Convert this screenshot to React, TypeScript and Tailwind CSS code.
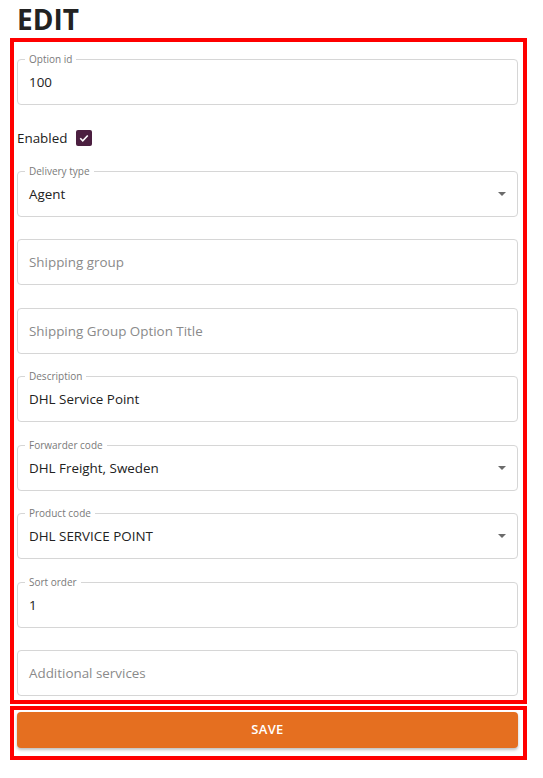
// Edit form (outlined fields + save button)
import type { ReactNode } from 'react';

type Field = {
  label: string;
  value?: string;
  select?: boolean;
  gap: string;
};

// fields after the "Enabled" row
const FIELDS: Field[] = [
  { label: 'Delivery type', value: 'Agent', select: true, gap: 'mt-0' },
  { label: 'Shipping group', gap: 'mt-[22px]' },
  { label: 'Shipping Group Option Title', gap: 'mt-[23px]' },
  { label: 'Description', value: 'DHL Service Point', gap: 'mt-[22px]' },
  { label: 'Forwarder code', value: 'DHL Freight, Sweden', select: true, gap: 'mt-[23px]' },
  { label: 'Product code', value: 'DHL SERVICE POINT', select: true, gap: 'mt-[22px]' },
  { label: 'Sort order', value: '1', gap: 'mt-[23px]' },
  { label: 'Additional services', gap: 'mt-[22px]' },
];

const Outlined = ({ label, value, select, className = '' }: Omit<Field, 'gap'> & { className?: string }) => {
  const filled = value !== undefined;
  return (
    <div className={`relative h-[46px] rounded-[4px] border border-[#d6d6d6] flex items-center pl-[11px] pr-[11px] ${className}`}>
      {filled && (
        <span className="absolute left-[7px] top-[-7px] bg-white px-[4px] text-[10px] leading-[12px] text-[#7a7a7a]">
          {label}
        </span>
      )}
      <span className={`flex-1 text-[13.4px] ${filled ? 'text-[#222]' : 'text-[#8a8a8a]'}`}>
        {filled ? value : label}
      </span>
      {select && (
        <svg width="8" height="4" viewBox="0 0 8 4" className="shrink-0">
          <path d="M0 0h8L4 4z" fill="#6b6b6b" />
        </svg>
      )}
    </div>
  );
};

const RedBox = ({ children, className = '' }: { children: ReactNode; className?: string }) => (
  <div className={`ml-[10px] mr-[16px] border-4 border-[#ff0000] pl-[3px] pr-[5px] ${className}`}>{children}</div>
);

export default function App() {
  return (
    <div className="w-[543px] h-[778px] bg-white" style={{ fontFamily: '"Open Sans", "Noto Sans", sans-serif' }}>
      <h1 className="h-[38px] pl-[17px] text-[28px] leading-[38px] font-bold text-[#222]">EDIT</h1>

      <RedBox className="pt-[17px] pb-[4px]">
        <Outlined label="Option id" value="100" />

        {/* 활성화 체크박스 */}
        <div className="h-[66px] flex items-center gap-[9px]">
          <span className="text-[13.4px] text-[#222]">Enabled</span>
          <span className="w-[16px] h-[16px] rounded-[2px] bg-[#4b1f40] flex items-center justify-center">
            <svg width="12" height="12" viewBox="0 0 24 24" fill="none" stroke="white" strokeWidth={3.2}>
              <path d="M4.5 12.5l5 5L19.5 7" />
            </svg>
          </span>
        </div>

        {FIELDS.map((f) => (
          <Outlined key={f.label} label={f.label} value={f.value} select={f.select} className={f.gap} />
        ))}
      </RedBox>

      <RedBox className="mt-[2px] pt-[2px] pb-[8px]">
        <button className="w-full h-[36px] rounded-[4px] bg-[#e56f20] text-white text-[13px] font-semibold tracking-[0.3px] shadow-[0_2px_3px_rgba(0,0,0,0.25)]">
          SAVE
        </button>
      </RedBox>
    </div>
  );
}
